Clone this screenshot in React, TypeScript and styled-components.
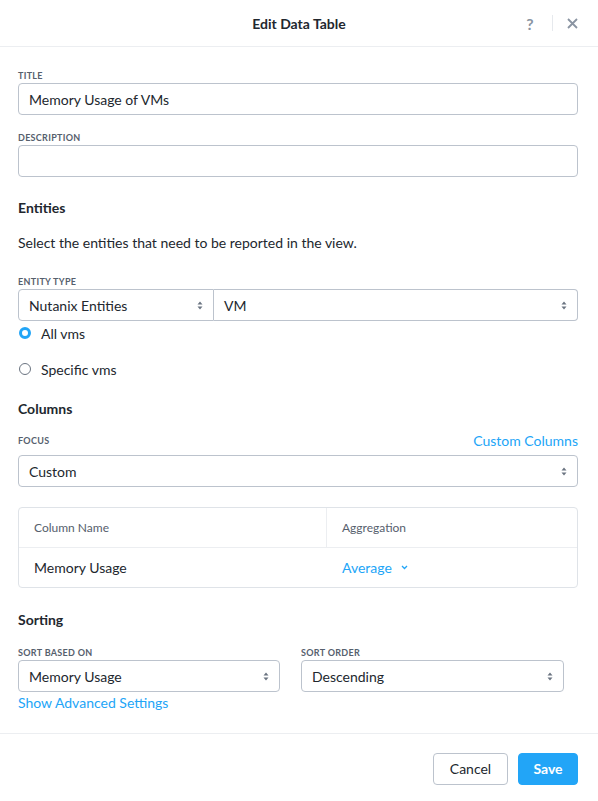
import React from 'react';
import styled, { createGlobalStyle } from 'styled-components';

const GlobalStyle = createGlobalStyle`
  html, body {
    margin: 0;
    padding: 0;
    background: #ffffff;
  }
  body {
    font-family: Lato, 'Liberation Sans', sans-serif;
    color: #22272e;
  }
  * {
    box-sizing: border-box;
  }
`;

const Modal = styled.div`
  width: 598px;
  height: 801px;
  display: flex;
  flex-direction: column;
  background: #ffffff;
`;

const Header = styled.div`
  height: 47px;
  position: relative;
  display: flex;
  align-items: center;
  justify-content: center;
  border-bottom: 1px solid #eceef1;
  flex-shrink: 0;
`;

const HeaderTitle = styled.div`
  font-size: 14px;
  font-weight: 700;
  color: #22272e;
`;

const HeaderActions = styled.div`
  position: absolute;
  right: 20px;
  top: 0;
  bottom: 0;
  display: flex;
  align-items: center;
`;

const HeaderIcon = styled.span`
  width: 12px;
  display: grid;
  place-items: center;
  color: #8a94a2;
  font-size: 16px;
  font-weight: 700;
`;

const HeaderDivider = styled.span`
  width: 1px;
  height: 16px;
  background: #e6e9ed;
  margin: 0 13px 0 16px;
`;

const Body = styled.div`
  flex: 1;
  padding: 19px 20px 0 18px;
`;

const Field = styled.div<{ mb?: number; mt?: number }>`
  margin-top: ${(p) => p.mt ?? 0}px;
  margin-bottom: ${(p) => p.mb ?? 0}px;
`;

const LabelRow = styled.div`
  display: flex;
  align-items: flex-end;
  height: 17px;
`;

const LinkLabelRow = styled.div`
  display: flex;
  justify-content: space-between;
  align-items: center;
  height: 22px;
  margin-bottom: 4px;

  & > div {
    padding: 2px 0 0;
  }
`;

const Label = styled.div`
  font-size: 9px;
  font-weight: 700;
  letter-spacing: 0.3px;
  color: #56606d;
  text-transform: uppercase;
  line-height: 12px;
  padding-bottom: 1px;
`;

const Link = styled.a`
  color: #22a5f7;
  font-size: 14px;
  line-height: 17px;
  text-decoration: none;
  cursor: pointer;
`;

const TextInput = styled.div`
  height: 32px;
  border: 1px solid #bcc3cd;
  border-radius: 4px;
  padding: 0 10px;
  display: flex;
  align-items: center;
  font-size: 14px;
  color: #22272e;
`;

const SelectRow = styled.div`
  display: flex;
`;

const Select = styled.div<{ w?: number; join?: 'left' | 'right' }>`
  ${(p) => (p.w ? `width: ${p.w}px;` : 'flex: 1;')}
  height: 32px;
  border: 1px solid #bcc3cd;
  border-radius: ${(p) =>
    p.join === 'left' ? '4px 0 0 4px' : p.join === 'right' ? '0 4px 4px 0' : '4px'};
  ${(p) => (p.join === 'right' ? 'border-left: none;' : '')}
  padding: 0 10px;
  display: flex;
  align-items: center;
  justify-content: space-between;
  font-size: 14px;
  color: #22272e;
`;

const Caret = () => (
  <svg width="6" height="9" viewBox="0 0 6 9">
    <path d="M3 0.5 L5.5 3.5 H0.5 Z M3 8.5 L0.5 5.5 H5.5 Z" fill="#6b7481" />
  </svg>
);

const SectionTitle = styled.div`
  font-size: 14px;
  font-weight: 700;
  color: #22272e;
  line-height: 18px;
`;

const Paragraph = styled.div`
  font-size: 14px;
  color: #22272e;
  line-height: 18px;
`;

const RadioRow = styled.label`
  display: flex;
  align-items: center;
  height: 24px;
  font-size: 14px;
  color: #22272e;
  gap: 10px;
  padding-left: 1px;
`;

const RadioDot = styled.span<{ checked?: boolean }>`
  width: 12px;
  height: 12px;
  border-radius: 50%;
  border: ${(p) => (p.checked ? '3.5px solid #22a5f7' : '1px solid #6b7481')};
  background: #fff;
`;

const Table = styled.div`
  border: 1px solid #dfe3e8;
  border-radius: 4px;
  display: grid;
  grid-template-columns: 308px 1fr;
`;

const Th = styled.div<{ last?: boolean }>`
  height: 40px;
  display: flex;
  align-items: center;
  padding: 0 15px;
  font-size: 12px;
  color: #56606d;
  border-bottom: 1px solid #eceef1;
  ${(p) => (p.last ? '' : 'border-right: 1px solid #eceef1;')}
`;

const Td = styled.div`
  height: 39px;
  display: flex;
  align-items: center;
  padding: 0 15px;
  font-size: 14px;
  color: #22272e;
`;

const Dropdown = styled.span`
  color: #22a5f7;
  font-size: 14px;
  display: inline-flex;
  align-items: center;
  gap: 9px;
`;

const SortRow = styled.div`
  display: flex;
  gap: 21px;
`;

const Footer = styled.div`
  height: 68px;
  border-top: 1px solid #eceef1;
  display: flex;
  align-items: center;
  justify-content: flex-end;
  gap: 10px;
  padding: 2px 20px 0 0;
  flex-shrink: 0;
`;

const Button = styled.button<{ primary?: boolean; w: number }>`
  width: ${(p) => p.w}px;
  height: 32px;
  padding: 0;
  border-radius: 4px;
  font-family: inherit;
  font-size: 14px;
  font-weight: ${(p) => (p.primary ? 700 : 400)};
  color: ${(p) => (p.primary ? '#ffffff' : '#22272e')};
  background: ${(p) => (p.primary ? '#22a5f7' : '#ffffff')};
  border: 1px solid ${(p) => (p.primary ? '#22a5f7' : '#bcc3cd')};
  cursor: pointer;
`;

export default function App() {
  return (
    <Modal>
      <GlobalStyle />
      <Header>
        <HeaderTitle>Edit Data Table</HeaderTitle>
        <HeaderActions>
          <HeaderIcon>?</HeaderIcon>
          <HeaderDivider />
          <HeaderIcon>
            <svg width="11" height="11" viewBox="0 0 11 11">
              <path d="M1 1 L10 10 M10 1 L1 10" stroke="#8a94a2" strokeWidth="1.8" />
            </svg>
          </HeaderIcon>
        </HeaderActions>
      </Header>

      <Body>
        <Field mb={13}>
          <LabelRow>
            <Label>Title</Label>
          </LabelRow>
          <TextInput>Memory Usage of VMs</TextInput>
        </Field>
        <Field mb={22}>
          <LabelRow>
            <Label>Description</Label>
          </LabelRow>
          <TextInput />
        </Field>

        <Field mb={17}>
          <SectionTitle>Entities</SectionTitle>
        </Field>
        <Field mb={20}>
          <Paragraph>Select the entities that need to be reported in the view.</Paragraph>
        </Field>

        <Field>
          <LabelRow>
            <Label>Entity Type</Label>
          </LabelRow>
          <SelectRow>
            <Select w={196} join="left">
              Nutanix Entities
              <Caret />
            </Select>
            <Select join="right">
              VM
              <Caret />
            </Select>
          </SelectRow>
        </Field>
        <RadioRow>
          <RadioDot checked />
          All vms
        </RadioRow>
        <Field mt={12} mb={19}>
          <RadioRow>
            <RadioDot />
            Specific vms
          </RadioRow>
        </Field>

        <Field mb={11}>
          <SectionTitle>Columns</SectionTitle>
        </Field>
        <Field mb={20}>
          <LinkLabelRow>
            <Label>Focus</Label>
            <Link>Custom Columns</Link>
          </LinkLabelRow>
          <Select>
            Custom
            <Caret />
          </Select>
        </Field>

        <Field mb={23}>
          <Table>
            <Th>Column Name</Th>
            <Th last>Aggregation</Th>
            <Td>Memory Usage</Td>
            <Td>
              <Dropdown>
                Average
                <svg width="7" height="5" viewBox="0 0 7 5">
                  <path d="M1 1 L3.5 3.5 L6 1" stroke="#22a5f7" strokeWidth="1.3" fill="none" />
                </svg>
              </Dropdown>
            </Td>
          </Table>
        </Field>

        <Field mb={14}>
          <SectionTitle>Sorting</SectionTitle>
        </Field>
        <SortRow>
          <Field>
            <LabelRow>
              <Label>Sort Based On</Label>
            </LabelRow>
            <Select w={262}>
              Memory Usage
              <Caret />
            </Select>
          </Field>
          <Field>
            <LabelRow>
              <Label>Sort Order</Label>
            </LabelRow>
            <Select w={263}>
              Descending
              <Caret />
            </Select>
          </Field>
        </SortRow>
        <Field>
          <Link>Show Advanced Settings</Link>
        </Field>
      </Body>

      <Footer>
        <Button w={75}>Cancel</Button>
        <Button primary w={60}>
          Save
        </Button>
      </Footer>
    </Modal>
  );
}
